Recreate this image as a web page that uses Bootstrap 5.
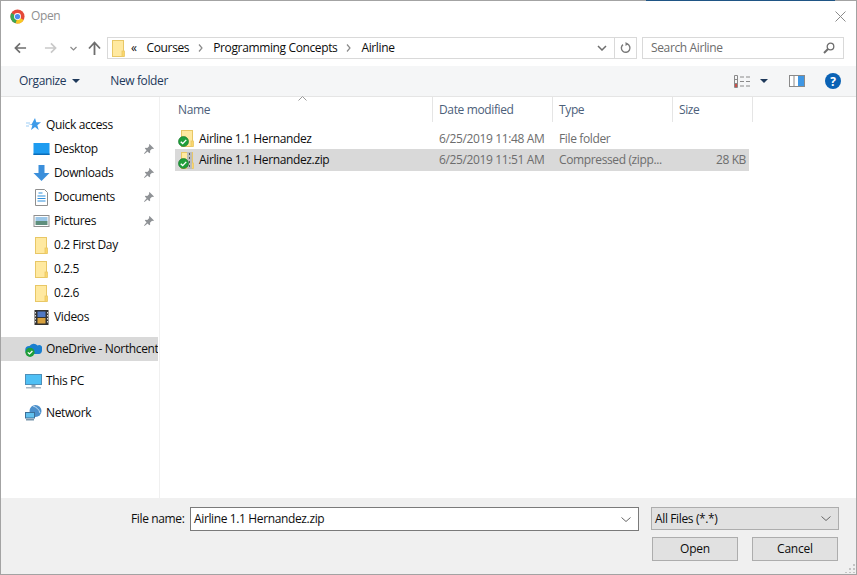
<!DOCTYPE html>
<html lang="en"><head><meta charset="utf-8"><title>Open</title>
<link rel="stylesheet" href="https://cdn.jsdelivr.net/npm/bootstrap@5.3.0/dist/css/bootstrap.min.css">
<style>
html,body{height:575px;overflow:hidden;background:#fff}
body{font-family:"Open Sans","Noto Sans","Liberation Sans",sans-serif;font-size:12px;line-height:16px;color:#0d0d0d;letter-spacing:-.37px;position:relative}
.dlg{width:857px;height:575px;border:1px solid #a3a3a3}
.strip{position:absolute;left:646px;top:0;width:189px;height:1px;background:#1f5585}
.ttl{height:31px;padding-left:9px;padding-bottom:1px;color:#8f8f8f}
.ttl .x{margin-left:auto;margin-right:10px}
.navr{height:34px;padding-left:13px;padding-bottom:2px}
.navr svg{flex:none}
.addr{width:530px;height:22px;margin-left:6px;border:1px solid #d9d9d9;padding-left:4px}
.addr .cr{margin:0 10px 0 9px}
.addr .end{margin-left:auto;width:24px;height:20px}
.addr .rf{width:22px;height:20px;border-left:1px solid #d9d9d9}
.srch{width:202px;height:22px;margin-left:5px;border:1px solid #d9d9d9;padding:0 8px;color:#6d6d6d}
.tools{height:31px;background:#f5f6f7;border-bottom:1px solid #e5e5e5;padding-left:18px;color:#1e395b}
.tools .nf{margin-left:30px}
.tools .rgt{margin-left:auto;margin-right:15px}
.mainw{height:401px}
.side{width:159px;flex:none;border-right:1px solid #f0f0f0;padding-top:16px;overflow:hidden}
.srow{height:24px;padding-left:32px;gap:4px;white-space:nowrap;position:relative}
.srow.top{padding-left:24px;gap:4px}
.srow .pin{position:absolute;left:142px;top:6px}
.srow.sel{background:#d9d9d9;width:157px;overflow:hidden}
.gap8{height:8px}
.ic{width:17px;flex:none}
.filesw{flex:1;padding-left:15px;min-width:0}
.cols{height:26px;color:#4c607a;position:relative}
.cols .arrow{position:absolute;left:123px;top:-1px}
.cn{width:258px;padding-left:3px}.cd{width:120px;padding-left:6px}.ct{width:120px;padding-left:6px}.cs{width:80px;padding-left:6px}
.cols>div{height:25px;border-right:1px solid #e5e5e5;line-height:25px}
.frow{height:21px;width:574px}
.frow .cn,.frow .cd,.frow .ct{white-space:nowrap}
.frow .cd,.frow .ct{color:#6d6d6d}
.frow .cs{width:73px;text-align:right;padding-right:0;color:#6d6d6d}
.frow.sel{background:#d9d9d9;height:22px}
.frow .cn{gap:5px;padding-left:3px}
.ficon svg:first-child{margin-left:3px}
.list{padding-top:5px}
.foot{height:76px;background:#f0f0f0;position:relative;padding:9px 17px 0 130px}
.lbl{width:59px;flex:none;line-height:24px}
.fname{width:449px;height:24px;background:#fff;border:1px solid #7a7a7a;padding-left:3px;flex:none}
.ftype{width:188px;height:23px;margin-left:12px;background:#e1e1e1;border:1px solid #adadad;padding-left:3px;flex:none}
.cv{margin-left:auto;margin-right:7px}
.btnw{margin-top:6px;gap:14px;justify-content:flex-end;padding-right:1px}
.wbtn{width:86px;height:24px;background:#e1e1e1;border:1px solid #adadad;border-radius:0;padding:0;font-size:12px;line-height:22px;color:#0d0d0d;letter-spacing:-.2px}
.grip{position:absolute;right:1px;bottom:1px}
</style></head>
<body>
<svg width="0" height="0" class="d-block position-absolute">
<defs>
<symbol id="folder" viewBox="0 0 13 17"><rect x=".5" y=".5" width="11" height="16" fill="#ffe9a0" stroke="#e8c766"/><rect x="10" y="11" width="2.500" height="5.500" fill="#fbd66b" stroke="#e8c766" stroke-width=".8"/></symbol>
<symbol id="chk" viewBox="0 0 12 12"><circle cx="6" cy="6" r="5.500" fill="#1f9e3a" stroke="#0c6b22" stroke-width=".6"/><path d="M3 6.200l2.100 2.100L9 4.200" fill="none" stroke="#fff" stroke-width="1.500"/></symbol>
<symbol id="pin" viewBox="0 0 12 12"><path d="M6.500 1l4.500 4.500-1 .6-1-.4-2 2 .2 1.800-.9.7-1.700-1.800L1.500 11l-.5-.5 2.600-3.200L1.800 5.600l.7-.9 1.800.2 2-2-.4-1z" fill="#8f9296"/></symbol>
</defs></svg>
<div class="dlg d-flex flex-column">
  <div class="ttl d-flex align-items-center">
    <svg width="15" height="15" viewBox="0 0 16 16" style="margin-right:6px"><circle cx="8" cy="8" r="7.500" fill="#e5493a"/><path d="M8 8L14.500 11.700A7.500 7.500 0 0 1 6 15.200z" fill="#f7c923"/><path d="M8 8L6 15.200A7.500 7.500 0 0 1 1.500 4.200z" fill="#39a853"/><circle cx="8" cy="8" r="3.700" fill="#fff"/><circle cx="8" cy="8" r="2.800" fill="#4a8bf0"/></svg>
    <span>Open</span>
    <svg class="x" width="11" height="11" viewBox="0 0 11 11"><path d="M.5.500l10 10M10.500.5l-10 10" stroke="#8a8a8a" fill="none"/></svg>
  </div>
  <div class="navr d-flex align-items-center">
    <svg width="13" height="12" viewBox="0 0 14 12"><path d="M13 6H2M6.500 1L1.500 6l5 5" fill="none" stroke="#6e6e6e" stroke-width="1.800"/></svg>
    <svg width="13" height="12" viewBox="0 0 14 12" style="margin-left:17px"><path d="M1 6h11M7.500 1l5 5-5 5" fill="none" stroke="#c9c9c9" stroke-width="1.800"/></svg>
    <svg width="7" height="5" viewBox="0 0 7 5" style="margin-left:13px"><path d="M.5 1l3 3 3-3" fill="none" stroke="#8a8a8a" stroke-width="1.200"/></svg>
    <svg width="13" height="14" viewBox="0 0 13 14" style="margin-left:11px"><path d="M6.500 14V2M1 7.500l5.500-6 5.500 6" fill="none" stroke="#6e6e6e" stroke-width="1.800"/></svg>
    <div class="addr d-flex align-items-center">
      <svg width="13" height="17" class="flex-none"><use href="#folder"/></svg>
      <span style="margin-left:6px">«</span><span style="margin-left:10px">Courses</span>
      <svg class="cr" width="5" height="8" viewBox="0 0 5 8"><path d="M1 .5l3 3.500-3 3.500" fill="none" stroke="#8a8a8a" stroke-width="1.200"/></svg>
      <span>Programming Concepts</span>
      <svg class="cr" width="5" height="8" viewBox="0 0 5 8"><path d="M1 .5l3 3.500-3 3.500" fill="none" stroke="#8a8a8a" stroke-width="1.200"/></svg>
      <span>Airline</span>
      <div class="end d-flex align-items-center justify-content-center"><svg width="10" height="6" viewBox="0 0 10 6"><path d="M1 1l4 4 4-4" fill="none" stroke="#6e6e6e" stroke-width="1.500"/></svg></div>
      <div class="rf d-flex align-items-center justify-content-center"><svg width="12" height="12" viewBox="0 0 12 12"><path d="M7 1.900A4.300 4.300 0 1 1 3 2.600" fill="none" stroke="#7a7a7a" stroke-width="1.400"/><path d="M5.500 0v4l3-2z" fill="#7a7a7a"/></svg></div>
    </div>
    <div class="srch d-flex align-items-center justify-content-between">
      <span>Search Airline</span>
      <svg width="12" height="12" viewBox="0 0 12 12"><circle cx="7.500" cy="4.500" r="3.300" fill="none" stroke="#6e6e6e" stroke-width="1.300"/><path d="M5 7L1 11" stroke="#6e6e6e" stroke-width="2"/></svg>
    </div>
  </div>
  <div class="tools d-flex align-items-center">
    <span>Organize</span>
    <svg width="8" height="4" viewBox="0 0 8 4" style="margin-left:6px"><path d="M0 0h8L4 4z" fill="#1e395b"/></svg>
    <span class="nf">New folder</span>
    <div class="rgt d-flex align-items-center">
      <svg width="17" height="13" viewBox="0 0 17 13"><path d="M.5.500h3v12h-3zM.5 4.500h3M.5 8.500h3" fill="none" stroke="#8a8a8a"/><path d="M6 2h4M12 2h4M6 6.500h4M12 6.500h4M6 11h4M12 11h4" stroke="#8a8a8a"/><rect x="1" y="9" width="2" height="3" fill="#c9504a"/></svg>
      <svg width="8" height="4" viewBox="0 0 8 4" style="margin-left:9px"><path d="M0 0h8L4 4z" fill="#1e395b"/></svg>
      <svg width="16" height="12" viewBox="0 0 16 12" style="margin-left:21px"><rect x=".5" y=".5" width="15" height="11" fill="#fff" stroke="#8a8a8a"/><rect x="9" y="1" width="6" height="10" fill="#3f97e4"/><path d="M5 1v10" stroke="#8a8a8a"/></svg>
      <svg width="16" height="16" viewBox="0 0 16 16" style="margin-left:20px"><circle cx="8" cy="8" r="8" fill="#0a62b5"/><text x="8" y="12.500" text-anchor="middle" font-size="12" font-weight="700" fill="#fff" font-family="Open Sans">?</text></svg>
    </div>
  </div>
  <div class="mainw d-flex">
    <div class="side">
      <div class="srow top d-flex align-items-center"><svg class="ic" width="15" height="14" viewBox="0 0 15 14"><path d="M9 0l1.300 4.300H15l-3.700 2.900 1.400 4.800L9 9.100 5 12l1.400-4.800L2 6.500h3.500z" fill="#3d9be9"/><path d="M0 5h4M0 8h3" stroke="#9ccdf5"/></svg><span>Quick access</span></div>
      <div class="srow d-flex align-items-center"><svg class="ic" width="16" height="12" viewBox="0 0 16 12"><rect width="16" height="12" fill="#1e9cf0"/><rect x="0" y="10.500" width="16" height="1.500" fill="#0b6cb8"/></svg><span>Desktop</span><svg class="pin" width="12" height="12"><use href="#pin"/></svg></div>
      <div class="srow d-flex align-items-center"><svg class="ic" width="16" height="16" viewBox="0 0 16 16"><path d="M5 0h6v8h5l-8 8-8-8h5z" fill="#3b8fdb"/></svg><span>Downloads</span><svg class="pin" width="12" height="12"><use href="#pin"/></svg></div>
      <div class="srow d-flex align-items-center"><svg class="ic" width="12" height="17" viewBox="0 0 17 17"><path d="M2.500.5h9l3 3v13h-12z" fill="#fff" stroke="#8f8f8f"/><path d="M5.500 4h4M4.500 7h8M4.500 9.500h8M4.500 12h8" stroke="#2f8fdc" stroke-width="1.200"/></svg><span>Documents</span><svg class="pin" width="12" height="12"><use href="#pin"/></svg></div>
      <div class="srow d-flex align-items-center"><svg class="ic" width="16" height="12" viewBox="0 0 16 12"><rect x=".5" y=".5" width="15" height="11" fill="#fff" stroke="#8f8f8f"/><rect x="2" y="2" width="12" height="4" fill="#9cc7e8"/><rect x="2" y="6" width="12" height="4" fill="#5f8f7d"/></svg><span>Pictures</span><svg class="pin" width="12" height="12"><use href="#pin"/></svg></div>
      <div class="srow d-flex align-items-center"><svg class="ic" height="17" viewBox="-2 0 17 17"><use href="#folder" width="13" height="17"/></svg><span>0.2 First Day</span></div>
      <div class="srow d-flex align-items-center"><svg class="ic" height="17" viewBox="-2 0 17 17"><use href="#folder" width="13" height="17"/></svg><span>0.2.5</span></div>
      <div class="srow d-flex align-items-center"><svg class="ic" height="17" viewBox="-2 0 17 17"><use href="#folder" width="13" height="17"/></svg><span>0.2.6</span></div>
      <div class="srow d-flex align-items-center"><svg class="ic" height="15" viewBox="-1 0 16 15"><rect width="14" height="15" fill="#333"/><rect x="3" y="1.500" width="8" height="5.500" fill="#4f78c4"/><rect x="3" y="8" width="8" height="5.500" fill="#d8a13e"/><path d="M1 2v11M13 2v11" stroke="#ddd" stroke-dasharray="1.500 1.500"/></svg><span>Videos</span></div>
      <div class="gap8"></div>
      <div class="srow top sel d-flex align-items-center"><svg class="ic" height="15" viewBox="0 0 17 15"><path d="M4 12a4 4 0 0 1 .5-8 5 5 0 0 1 8-.5A3.500 3.500 0 0 1 17 8.500c0 2-1.500 3.500-3 3.500z" fill="#1a7fd0"/><circle cx="5" cy="10.300" r="4.600" fill="#1f9e3a"/><path d="M2.800 10.300l1.700 1.700 2.900-3" fill="none" stroke="#fff" stroke-width="1.200"/></svg><span>OneDrive - Northcentral University</span></div>
      <div class="gap8"></div>
      <div class="srow top d-flex align-items-center"><svg class="ic" height="15" viewBox="0 0 17 15"><rect x=".5" y=".5" width="16" height="10" fill="#4fc0f5" stroke="#4e8fb8"/><rect x="6.500" y="11" width="4" height="2" fill="#8fa6b8"/><rect x="1" y="13" width="15" height="1.500" fill="#a9b9c6"/></svg><span>This PC</span></div>
      <div class="gap8"></div>
      <div class="srow top d-flex align-items-center"><svg class="ic" height="16" viewBox="0 0 17 16"><circle cx="10.500" cy="6" r="6" fill="#4c8fcb"/><path d="M8 1c3 1 6 3 7 7" stroke="#bcdcf3" fill="none"/><rect x=".5" y="7.500" width="9" height="5.500" fill="#62c1ef" stroke="#3c6f97"/><rect x="1" y="14" width="8" height="1.500" fill="#7895ab"/></svg><span>Network</span></div>
    </div>
    <div class="filesw">
      <div class="cols d-flex">
        <svg class="arrow" width="9" height="5" viewBox="0 0 9 5"><path d="M.5 4.500l4-4 4 4" fill="none" stroke="#9a9a9a"/></svg>
        <div class="cn">Name</div><div class="cd">Date modified</div><div class="ct">Type</div><div class="cs">Size</div>
      </div>
      <div class="list">
        <div class="frow d-flex align-items-center">
          <div class="cn d-flex align-items-center"><span class="position-relative d-block flex-none ficon"><svg width="13" height="17" class="d-block"><use href="#folder"/></svg><svg width="11" height="11" class="position-absolute start-0 bottom-0"><use href="#chk"/></svg></span><span>Airline 1.1 Hernandez</span></div>
          <div class="cd">6/25/2019 11:48 AM</div><div class="ct">File folder</div><div class="cs"></div>
        </div>
        <div class="frow sel d-flex align-items-center">
          <div class="cn d-flex align-items-center"><span class="position-relative d-block flex-none ficon"><svg width="13" height="17" class="d-block"><use href="#folder"/><rect x="6" y="0" width="5" height="17" fill="#bdbdbd"/><path d="M8.500 1v15" stroke="#555" stroke-dasharray="2 2"/></svg><svg width="11" height="11" class="position-absolute start-0 bottom-0"><use href="#chk"/></svg></span><span>Airline 1.1 Hernandez.zip</span></div>
          <div class="cd">6/25/2019 11:51 AM</div><div class="ct">Compressed (zipp...</div><div class="cs">28 KB</div>
        </div>
      </div>
    </div>
  </div>
  <div class="foot">
    <div class="d-flex">
      <div class="lbl">File name:</div>
      <div class="fname d-flex align-items-center"><span>Airline 1.1 Hernandez.zip</span><svg class="cv" width="10" height="5" viewBox="0 0 10 5"><path d="M.5.500l4.500 4 4.500-4" fill="none" stroke="#666"/></svg></div>
      <div class="ftype d-flex align-items-center"><span>All Files (*.*)</span><svg class="cv" width="10" height="5" viewBox="0 0 10 5"><path d="M.5.500l4.500 4 4.500-4" fill="none" stroke="#666"/></svg></div>
    </div>
    <div class="btnw d-flex">
      <button type="button" class="btn wbtn">Open</button>
      <button type="button" class="btn wbtn">Cancel</button>
    </div>
    <svg class="grip" width="10" height="10" viewBox="0 0 10 10"><path d="M8 1h2v2H8zM4 5h2v2H4zM8 5h2v2H8zM0 9h2v1H0zM4 9h2v1H4zM8 9h2v1H8z" fill="#c4c4c4"/></svg>
  </div>
</div>
<div class="strip"></div>
</body></html>
